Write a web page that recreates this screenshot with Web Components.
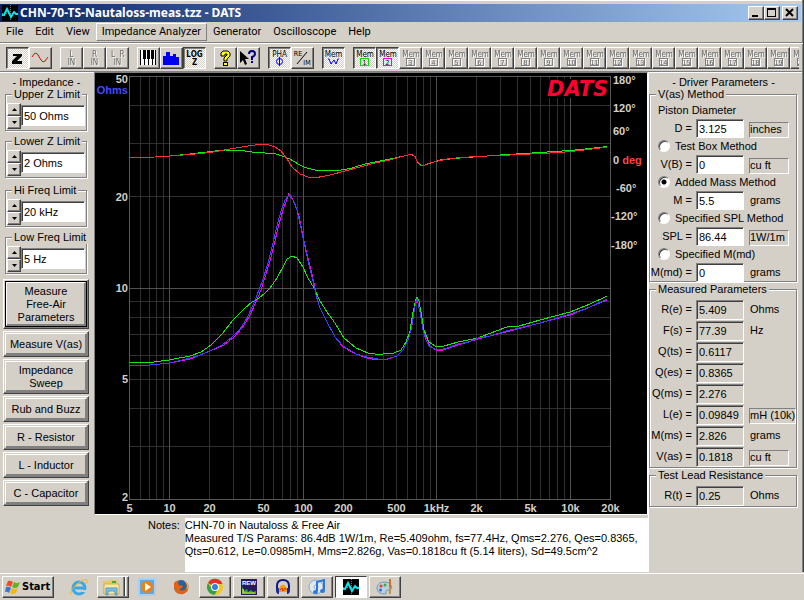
<!DOCTYPE html>
<html lang="en">
<head>
<meta charset="utf-8">
<title>CHN-70-TS-Nautaloss-meas.tzz - DATS</title>
<style>
  html, body { margin: 0; height: 100%; }
  body {
    --face: #d4d0c8;
    --shade: #808080;
    --dark: #404040;
    background: var(--face);
    color: #000;
    font: 11px/13px "Liberation Sans", Arial, sans-serif;
  }
</style>
</head>
<body>
<dats-app></dats-app>

<script>
// every element clones its own template into an open shadow root
function define(name, html, setup) {
  const template = document.createElement("template");
  template.innerHTML = html;
  customElements.define(name, class extends HTMLElement {
    constructor() {
      super();
      this.shadow = this.attachShadow({ mode: "open" });
      this.shadow.appendChild(template.content.cloneNode(true));
    }
    connectedCallback() {
      if (setup) setup(this, this.shadow);
    }
  });
}

// green/cyan trace on black, used in the title bar and on the taskbar
const datsIcon = `
  <svg width="16" height="16" viewBox="0 0 16 16" aria-hidden="true">
    <rect width="16" height="16" fill="#000"/>
    <path d="M8.500 0V16M0 8.500H16" stroke="#707070" stroke-width="1" stroke-dasharray="1 1"/>
    <path d="M0 10H2L5 4L9 12L12 7L14 9H16" fill="none" stroke="#00e8f0" stroke-width="2"/>
  </svg>`;

define("title-bar", `
  <style>
    :host { display: flex; align-items: center; height: 18px; margin: 4px 2px 0 0; padding: 0 3px 0 2px;
      background: linear-gradient(90deg, #0a246a, #a6caf0); }
    h1 { flex: 1; margin: 0 0 0 2px; color: #fff; font: bold 12px/18px "Noto Sans", sans-serif; white-space: nowrap; overflow: hidden; }
    button { width: 16px; height: 14px; padding: 0; display: flex; background: var(--face);
      border: 1px solid; border-color: #fff var(--dark) var(--dark) #fff; box-shadow: inset -1px -1px 0 var(--shade); }
    button:last-child { margin-left: 2px; }
    svg { display: block; flex: none; }
  </style>
  ${datsIcon}
  <h1><slot></slot></h1>
  <button aria-label="Minimize"><svg width="14" height="12"><path d="M3 8h6v2h-6z"/></svg></button>
  <button aria-label="Maximize"><svg width="14" height="12"><path d="M2 1h9v9h-9zM3 3v6h7v-6z" fill-rule="evenodd"/></svg></button>
  <button aria-label="Close"><svg width="14" height="12"><path d="M3 2L10 9M10 2L3 9" stroke="#000" stroke-width="2"/></svg></button>
`);

define("menu-bar", `
  <style>
    :host { display: block; border-bottom: 1px solid var(--shade); box-shadow: 0 1px 0 #fff; }
    nav { display: flex; height: 20px; align-items: center; }
    button { height: 18px; padding: 0 5px; border: 1px solid transparent; background: none; color: #000;
      font: 11px/16px Roboto, sans-serif; }
    button.hot { border-color: #fff var(--shade) var(--shade) #fff; }
  </style>
  <nav></nav>
`, (host, root) => {
  const nav = root.querySelector("nav");
  host.getAttribute("items").split("|").forEach((item) => {
    const button = document.createElement("button");
    button.textContent = item;
    if (item === host.getAttribute("hot")) button.className = "hot";
    nav.appendChild(button);
  });
});

define("tool-button", `
  <style>
    :host { display: block; flex: none; }
    button { display: block; width: 23px; height: 22px; padding: 0; background: var(--face);
      border: 1px solid; border-color: #fff var(--dark) var(--dark) #fff; box-shadow: inset -1px -1px 0 var(--shade); }
    :host([pressed]) button { background: repeating-conic-gradient(#fff 0 25%, var(--face) 0 50%) 0 0 / 2px 2px;
      border-color: var(--dark) #fff #fff var(--dark); box-shadow: inset 1px 1px 0 var(--shade); }
    svg { display: block; }
    text { font: 8px "DejaVu Sans Condensed", "DejaVu Sans", sans-serif; text-anchor: middle; }
    text.b { font-weight: bold; }
    :host([off]) svg { filter: drop-shadow(1px 1px 0 #fff); fill: #686868; }
  </style>
  <button><svg width="21" height="20" viewBox="0 0 21 20"></svg></button>
`, (host, root) => {
  root.querySelector("svg").innerHTML = toolIcons[host.getAttribute("icon")] || memIcon(host.getAttribute("icon"), host.hasAttribute("off"));
  root.querySelector("button").setAttribute("aria-label", host.getAttribute("label"));
  root.querySelector("button").disabled = host.hasAttribute("off");
});

function memIcon(n, off) {
  const color = off ? "#808080" : (n === "1" ? "#00e000" : "#f000f0");
  return `<text x="11" y="9">Mem</text>
    <rect x="6.5" y="10.5" width="8" height="7" fill="none" stroke="${color}"/>
    <text x="10.5" y="17" style="font-size:7px">${n}</text>`;
}

const toolIcons = {
  z: `<path d="M6 6H15V8L10 13H15V16H5V13L10 8H6Z"/>`,
  sine: `<path d="M2 9L4 6L6 5L8 7L11 12L13 14L15 13L18 9" fill="none" stroke="#f00000"/>`,
  lin: `<text x="10.5" y="9">L</text><text x="10.5" y="17">IN</text>`,
  rin: `<text x="10.5" y="9">R</text><text x="10.5" y="17">IN</text>`,
  lrin: `<text x="6" y="9">L</text><text x="15" y="9">R</text><text x="10.5" y="17">IN</text>`,
  piano: `<rect x="2" y="2" width="16" height="15" fill="#fff"/>
    <path d="M2.5 2V17M6.5 2V17M10.5 2V17M14.5 2V17M17.5 2V17" stroke="#000"/>
    <path d="M5 2h3v9h-3zM9 2h3v9h-3zM13 2h3v9h-3z"/>`,
  bars: `<path d="M2 17V8H5V4H9V8H12V6H15V9H18V17Z" fill="#0000f0"/>`,
  log: `<text x="10.5" y="9" class="b">LOG</text><text x="10.5" y="17" class="b">Z</text>`,
  help: `<path d="M6 7V5L8 3H13L15 5V8L12 11V13H9V10L12 7V6H10V8H6Z" fill="#ffff00" stroke="#000"/><rect x="8.500" y="14.500" width="4" height="3" fill="#ffff00" stroke="#000"/>`,
  context: `<path d="M2 3V15L5 12L7 17L9 16L7 11H11Z"/>
    <path d="M11 6Q11 3 14 3T17 6Q17 8 14 9V12M14 13V15" fill="none" stroke="#000080" stroke-width="2"/>`,
  pha: `<text x="10.5" y="9">PHA</text><path d="M10.5 9V18" stroke="#0000f0"/><ellipse cx="10.500" cy="13.500" rx="3" ry="3" fill="none" stroke="#0000f0"/>`,
  reim: `<text x="6" y="8" style="font-size:7px">RE</text><path d="M5 16L15 4" stroke="#000"/><text x="15" y="17" style="font-size:7px">IM</text>`,
  memw: `<text x="10.5" y="9">Mem</text><path d="M5 11H6L8 16L11 12L13 16L15 11H16" fill="none" stroke="#0000f0" stroke-width="1"/>`
};

define("tool-bar", `
  <style>
    :host { display: flex; gap: 8px; margin: 1px 4px 0 0; padding: 3px 0 2px 6px; overflow: hidden; }
    div { display: flex; flex: none; }
  </style>
  <div><tool-button icon="z" label="Impedance" pressed></tool-button><tool-button icon="sine" label="Oscilloscope"></tool-button></div>
  <div><tool-button icon="lin" label="Left in" off></tool-button><tool-button icon="rin" label="Right in" off></tool-button><tool-button icon="lrin" label="Left and right in" off></tool-button></div>
  <div><tool-button icon="piano" label="Notes"></tool-button><tool-button icon="bars" label="Bars"></tool-button><tool-button icon="log" label="Log Z" pressed></tool-button></div>
  <div><tool-button icon="help" label="Help"></tool-button><tool-button icon="context" label="Context help"></tool-button></div>
  <div><tool-button icon="pha" label="Phase" pressed></tool-button><tool-button icon="reim" label="Real / imaginary"></tool-button></div>
  <div><tool-button icon="memw" label="Working memory" pressed></tool-button></div>
  <div id="memories"></div>
`, (host, root) => {
  const memories = root.getElementById("memories");
  for (let n = 1; n <= 20; n++) {
    const state = n < 3 ? "pressed" : "off";
    memories.insertAdjacentHTML("beforeend", `<tool-button icon="${n}" label="Memory ${n}" ${state}></tool-button>`);
  }
});

define("group-box", `
  <style>
    :host { display: block; }
    fieldset { min-width: 0; margin: 0 1px 1px 0; padding: 0; border: 1px solid var(--shade);
      box-shadow: 1px 1px 0 #fff, inset 1px 1px 0 #fff; }
    legend { margin-left: 6px; padding: 0 2px; line-height: 13px; background: var(--face); white-space: nowrap; }
  </style>
  <fieldset><legend></legend><slot></slot></fieldset>
`, (host, root) => {
  root.querySelector("legend").textContent = host.getAttribute("caption");
});

define("spin-field", `
  <style>
    :host { display: block; }
    div { display: flex; align-items: center; height: 29px; padding: 0 1px; }
    span { flex: none; display: flex; flex-direction: column; }
    button { display: flex; align-items: center; justify-content: center; width: 14px; height: 13px; padding: 0; background: var(--face);
      border: 1px solid; border-color: #fff var(--dark) var(--dark) #fff; box-shadow: inset -1px -1px 0 var(--shade); }
    input { flex: 1; min-width: 0; box-sizing: border-box; height: 21px; padding: 0 0 0 2px; border: 1px solid;
      border-color: var(--shade) #fff #fff var(--shade); box-shadow: inset 1px 1px 0 var(--dark); background: #fff; font: inherit; color: #000; }
  </style>
  <div>
    <span>
      <button aria-label="Up"><svg width="5" height="3"><path d="M0 3L2.500 0L5 3Z"/></svg></button>
      <button aria-label="Down"><svg width="5" height="3"><path d="M0 0L2.500 3L5 0Z"/></svg></button>
    </span>
    <input type="text">
  </div>
`, (host, root) => {
  const input = root.querySelector("input");
  input.value = host.getAttribute("value");
  input.setAttribute("aria-label", host.getAttribute("label"));
});

define("command-button", `
  <style>
    :host { display: block; }
    button { display: block; width: 100%; padding: 1px; border: 1px solid; border-color: #fff var(--dark) var(--dark) #fff;
      box-shadow: inset -1px -1px 0 var(--shade); background: var(--face); font: inherit; color: #000; }
    span { display: flex; align-items: center; justify-content: center; min-height: 20px; white-space: nowrap;
      border: 1px solid; border-color: #fff var(--shade) var(--shade) #fff; box-shadow: inset -1px -1px 0 var(--shade); }
    :host([tall]) span { min-height: 29px; }
    :host([default]) span { min-height: 42px; outline: 1px solid #000; margin: 1px; }
  </style>
  <button><span><slot></slot></span></button>
`);

define("impedance-panel", `
  <style>
    :host { display: flex; flex-direction: column; padding: 1px 6px 0 5px; border-top: 1px solid #fff; }
    h2 { margin: 0; font: inherit; text-align: center; height: 14px; line-height: 16px; }
    .limits { display: flex; flex-direction: column; gap: 3px; }
    .limits + .limits { margin-top: 5px; }
    .commands { display: flex; flex-direction: column; gap: 2px; margin: 4px -1px 0 -2px; }
  </style>
  <h2>- Impedance -</h2>
  <div class="limits">
    <group-box caption="Upper Z Limit"><spin-field label="Upper Z Limit" value="50 Ohms"></spin-field></group-box>
    <group-box caption="Lower Z Limit"><spin-field label="Lower Z Limit" value="2 Ohms"></spin-field></group-box>
  </div>
  <div class="limits">
    <group-box caption="Hi Freq Limit"><spin-field label="Hi Freq Limit" value="20 kHz"></spin-field></group-box>
    <group-box caption="Low Freq Limit"><spin-field label="Low Freq Limit" value="5 Hz"></spin-field></group-box>
  </div>
  <div class="commands">
    <command-button default>Measure<br>Free-Air<br>Parameters</command-button>
    <command-button>Measure V(as)</command-button>
    <command-button tall>Impedance<br>Sweep</command-button>
    <command-button>Rub and Buzz</command-button>
    <command-button>R - Resistor</command-button>
    <command-button>L - Inductor</command-button>
    <command-button>C - Capacitor</command-button>
  </div>
`);

// log axes of the plot: frequency across, impedance down
const plot = { left: 129.5, right: 610.5, top: 76.5, bottom: 499.5 };
const xAt = (hz) => Math.floor(plot.left + (plot.right - plot.left) * Math.log10(hz / 5) / Math.log10(4000)) + 0.5;
const yAt = (ohm) => Math.floor(plot.top + (plot.bottom - plot.top) * Math.log10(50 / ohm) / Math.log10(25)) + 0.5;

const traces = [
  ["#f000f0", "130,366 150,365 170,363 190,359 210,351 224,345 234,337 242,328 249,317 256,302 261,290 265,277 270,261 274,245 279,224 283,210 287,199 288.5,194 291,196 295,204 299,216 303,236 307,254 311,270 314,283 317,298 320,308 326,320 335,337 343,347 356,354 367,358 378,360 388,359 397,356 403,350 408,340 412,325 415,306 417,299 420,312 424,332 430,346 436,350 443,350 458,345 478,339 506,332 536,324 570,315 607,300"],
  ["#18e818", "130,363 154,362 169,360 190,356 201,352 211,345 222,334 233,320 244,309 252,302 259,298 265,293 270,288 277,278 283,267 287,259 292,256 297,258 303,267 308,278 314,288 320,301 327,312 333,320 344,338 356,348 368,353 378,354.5 394,353 401,350 406,342 410,331 413,312 416,299 417,297 419,301 421,312 424,330 429,342 435,346 444,346 458,342 478,338 488,334 507,327 519,326 540,320 570,312 590,304 607,296"],
  ["#4040ff", "130,365 150,365 160,364 170,363 178,361 190,358 200,355 210,351 222,345 232,337 240,329 247,318 254,303 259,290 263,279 268,263 272,247 277,226 281,211 285,200 289,195 293,200 297,210 301,228 305,247 309,265 313,281 317,299 320,308 326,320 335,337 343,346 356,354 367,357 378,359 387,359 397,356 403,350 408,340 411,330 414,312 416,301 417,299 420,312 423,330 426,340 429,346 435,349 440,350 447,348 458,344 469,342 478,338 490,336 506,331 519,328 536,324 554,319 570,314 586,309 607,299"],
  ["#18e818", "130,157.5 155,157 170,156 190,154 215,151 225,150 242,150.5 255,152.5 275,153.5 282,156 290,159 298,164 305,167.5 315,170 325,170.5 338,170.5 350,168.500 365,164 380,161 395,158 408,155 412,154.5 415,157 418,163 421,165.500 425,165 440,160 460,158 500,155 540,152.500 570,150.5 590,148.5 607,146.5"],
  ["#ff3030", "130,157.5 155,157 170,156 190,154.500 210,152.500 230,149 245,146.5 258,144.5 268,144.5 275,147 281,151 287,159 292,167 300,174 308,177 317,177.5 330,175 345,171 360,167 375,163 390,160 400,157 408,155 412,154.5 415,156.5 417,161 420,165 423,165.7 430,163 440,160.500 450,158.5 475,156.5 500,155.500 540,153.500 560,152.5 580,150.5 600,148 607,147"]
];

define("impedance-chart", `
  <style>
    :host { display: block; border: 1px solid; border-color: var(--shade) #fff #fff var(--shade); }
    svg { display: block; width: 100%; background: #000; }
    path { fill: none; shape-rendering: crispEdges; }
    text { fill: #d4d0c8; font: bold 11px "Liberation Sans", Arial, sans-serif; }
    .x { text-anchor: middle; }
    .y { text-anchor: end; }
    .logo { fill: #ff0030; font: italic bold 21px "DejaVu Sans", sans-serif; }
  </style>
  <svg viewBox="95 73 552 441" role="img" aria-label="Impedance and phase against frequency">
    <g id="grid"></g><g id="traces"></g><g id="labels"></g>
  </svg>
`, (host, root) => {
  let minor = "", major = "";
  for (let decade = 1; decade <= 10000; decade *= 10) {
    for (let n = 1; n < 10; n++) {
      const hz = n * decade;
      if (hz <= 5 || hz >= 20000) continue;
      const line = `M${xAt(hz)} ${plot.top}V${plot.bottom}`;
      if (n === 1) major += line; else minor += line;
    }
  }
  [3, 4, 5, 6, 7, 8, 9, 20, 30, 40].forEach((ohm) => { minor += `M${plot.left} ${yAt(ohm)}H${plot.right}`; });
  major += `M${plot.left} ${yAt(10)}H${plot.right}`;
  root.getElementById("grid").innerHTML = `
    <path d="${minor}" stroke="#303030"/>
    <path d="${major}" stroke="#505050"/>
    <path d="M${plot.left} ${plot.top}H${plot.right}V${plot.bottom}H${plot.left}Z" stroke="#585858"/>
    <rect x="546" y="79" width="63" height="19"/>`;
  root.getElementById("traces").innerHTML = traces
    .map(([color, points]) => `<path d="M${points.replace(/ /g, "L")}" stroke="${color}"/>`).join("");

  const freq = [[5, "5"], [10, "10"], [20, "20"], [50, "50"], [100, "100"], [200, "200"], [500, "500"], [1000, "1kHz"], [2000, "2k"], [5000, "5k"], [10000, "10k"], [20000, "20k"]];
  const phase = [["180°", 84], ["120°", 112], ["60°", 135], ["-60°", 192], ["-120°", 220], ["-180°", 249]];
  root.getElementById("labels").innerHTML =
    freq.map(([hz, label]) => `<text class="x" x="${xAt(hz)}" y="512">${label}</text>`).join("") +
    [[50, 83], [20, 201], [10, 292], [5, 383], [2, 501]].map(([ohm, y]) => `<text class="y" x="128" y="${y}">${ohm}</text>`).join("") +
    phase.map(([label, y]) => `<text x="${label.length > 4 ? 611 : label[0] === "-" ? 616 : 613}" y="${y}">${label}</text>`).join("") +
    `<text x="613" y="164">0 <tspan fill="#ff4040">deg</tspan></text>
     <text class="y" x="128" y="94" style="fill:#4848ff">Ohms</text>
     <text class="logo" x="547" y="96">DATS</text>`;
});

define("notes-field", `
  <style>
    :host { display: flex; gap: 5px; padding: 3px 0 0 54px; }
    label { margin-top: 1px; }
    textarea { flex: 1; min-width: 0; height: 54px; box-sizing: border-box; padding: 1px 0; border: 0; resize: none; overflow: hidden;
      background: #fff; color: #000; font: inherit; }
  </style>
  <label for="notes">Notes:</label>
  <textarea id="notes" spellcheck="false"></textarea>
`, (host, root) => {
  root.getElementById("notes").value = host.textContent.trim();
});

define("driver-panel", `
  <style>
    :host { display: block; padding: 1px 4px 0 0; border: solid #fff; border-width: 1px 0 0 1px; }
    h2 { margin: 0; font: inherit; text-align: center; height: 14px; line-height: 16px; }
    .row { display: grid; grid-template-columns: 46px 48px auto 1fr; align-items: center; height: 18px; white-space: nowrap; }
    .row label { text-align: right; padding-right: 4px; }
    .row input { box-sizing: border-box; width: 48px; height: 19px; padding: 0 0 0 2px; border: 1px solid;
      border-color: var(--shade) #fff #fff var(--shade); box-shadow: inset 1px 1px 0 var(--dark); background: #fff; color: #000; font: inherit; }
    .row span { margin-left: 6px; }
    .row button { margin: 2px 0 0 5px; min-width: 40px; height: 16px; padding: 0; border: 1px solid;
      border-color: var(--shade) #fff #fff var(--shade); background: var(--face); color: #000; font: inherit; text-align: left; }
    .text, .option { display: flex; align-items: center; height: 18px; padding-left: 8px; }
    .option { gap: 5px; }
    .option input { appearance: none; width: 12px; height: 12px; margin: 0; border: 1px solid; border-radius: 50%;
      border-color: var(--shade) #fff #fff var(--shade); box-shadow: inset 1px 1px 0 var(--dark); background: #fff; }
    .option input:checked { background: radial-gradient(circle, #000 2px, #fff 3px); }
    .measured { padding-top: 3px; }
    .measured .row { height: 21px; }
    .measured input { height: 20px; background: var(--face); }
    group-box + group-box { margin-top: 1px; }
  </style>
  <h2>- Driver Parameters -</h2>
  <group-box caption="V(as) Method"><div id="method"></div></group-box>
  <group-box caption="Measured Parameters"><div id="measured" class="measured"></div></group-box>
  <group-box caption="Test Lead Resistance"><div id="lead" class="measured"></div></group-box>
`, (host, root) => {
  let count = 0;
  const row = (label, value, unit, readonly) => {
    const id = "p" + (++count);
    const tail = unit[0] === "[" ? `<button>${unit.slice(1, -1)}</button>` : `<span>${unit}</span>`;
    return `<div class="row"><label for="${id}">${label} =</label><input id="${id}" type="text" value="${value}" ${readonly ? "readonly" : ""}>${tail}</div>`;
  };
  const option = (label, checked) => {
    const id = "o" + (++count);
    return `<div class="option"><input type="radio" name="method" id="${id}" ${checked ? "checked" : ""}><label for="${id}">${label}</label></div>`;
  };
  root.getElementById("method").innerHTML =
    `<div class="text">Piston Diameter</div>` +
    row("D", "3.125", "[inches]") +
    option("Test Box Method") +
    row("V(B)", "0", "[cu ft]") +
    option("Added Mass Method", true) +
    row("M", "5.5", "grams") +
    option("Specified SPL Method") +
    row("SPL", "86.44", "[1W/1m]") +
    option("Specified M(md)") +
    row("M(md)", "0", "grams");
  root.getElementById("measured").innerHTML = [
    ["R(e)", "5.409", "Ohms"],
    ["F(s)", "77.39", "Hz"],
    ["Q(ts)", "0.6117", ""],
    ["Q(es)", "0.8365", ""],
    ["Q(ms)", "2.276", ""],
    ["L(e)", "0.09849", "[mH (10k)]"],
    ["M(ms)", "2.826", "grams"],
    ["V(as)", "0.1818", "[cu ft]"]
  ].map((p) => row(p[0], p[1], p[2], true)).join("");
  root.getElementById("lead").innerHTML = row("R(t)", "0.25", "Ohms", true);
});

const taskIcons = {
  ie: `<circle cx="10" cy="11" r="6" fill="none" stroke="#38a8e8" stroke-width="3"/><path d="M5 11H16" stroke="#38a8e8" stroke-width="3"/><path d="M13 13H18V15H13Z" fill="#d4d0c8"/><path d="M2 18Q0 15 7 8Q15 1 18 3Q19 4 17 7" fill="none" stroke="#f0b820" stroke-width="1"/>`,
  folder: `<path d="M2 4H8L9 3H16L17 5V17H2Z" fill="#e8c860"/><path d="M3 7H18V17H3Z" fill="#f8e8a0" stroke="#d0b050"/><path d="M5 18V11H16V18H14V14H7V18Z" fill="#80c0e8" stroke="#5098c8"/><path d="M11 5H15" stroke="#40a840" stroke-width="2"/>`,
  wmp: `<rect x="2" y="2" width="16" height="16" fill="#60a8e0" stroke="#a8d0f0" stroke-width="2"/><circle cx="10" cy="10" r="6" fill="#f08010"/><path d="M8 6L14 10L8 14Z" fill="#fff"/>`,
  firefox: `<circle cx="10" cy="10" r="7" fill="#2860a8"/><path d="M3 6Q5 3 8 4Q6 6 8 8L12 9Q11 12 8 12Q11 15 15 12Q17 9 14 4Q19 7 17 13Q14 18 9 17Q2 16 3 6Z" fill="#e86010"/><path d="M14 4Q18 8 16 12" fill="none" stroke="#f8c030" stroke-width="1"/>`,
  chrome: `<circle cx="10" cy="10" r="8" fill="#f0c820"/><path d="M10 10L3 6A8 8 0 0 1 17.500 7H10Z" fill="#d83828"/><path d="M3 6A8 8 0 0 0 9.500 18L13 12L7 12Z" fill="#38a048"/><circle cx="10" cy="10" r="4" fill="#fff"/><circle cx="10" cy="10" r="3" fill="#3880d8"/>`,
  rew: `<rect x="2" y="2" width="16" height="16" fill="#281860"/><text x="10" y="8" fill="#fff" text-anchor="middle" font-family="Liberation Sans" font-weight="bold" font-size="6">REW</text><path d="M3 17V9L5 14L8 12L9 15L12 13L14 15L17 14V17Z" fill="#20b040"/><path d="M4 17V12L5 16H16" fill="none" stroke="#e8d020"/>`,
  audacity: `<path d="M4 12V9Q4 3 10 3T16 9V12" fill="none" stroke="#101880" stroke-width="2"/><path d="M6 11Q10 4 14 11V15H6Z" fill="#f0a010"/><path d="M3 11H6V17H5Q3 16 3 14ZM14 11H17V14Q17 16 15 17H14Z" fill="#1828a0"/><path d="M7 13L9 11L10 14L12 11L13 13" fill="none" stroke="#e03010"/>`,
  itunes: `<circle cx="9" cy="10" r="7" fill="#e0e8f0" stroke="#90a8c0"/><circle cx="9" cy="10" r="2" fill="#fff" stroke="#90a8c0"/><path d="M10 14V5L17 3V13" fill="none" stroke="#2878e0" stroke-width="2"/><ellipse cx="8.500" cy="15" rx="2.500" ry="2" fill="#2878e0"/><ellipse cx="15.500" cy="14" rx="2.500" ry="2" fill="#2878e0"/>`,
  dats: `<g transform="translate(2 2)">${datsIcon}</g>`,
  paint: `<path d="M10 5Q2 5 2 11T10 17Q12 17 11 15T14 13Q18 13 16 8Q14 5 10 5Z" fill="#b8d0e0" stroke="#7898b0"/><circle cx="6" cy="9" r="1.500" fill="#e04030"/><circle cx="10" cy="8" r="1.500" fill="#40a840"/><circle cx="5.500" cy="13" r="1.500" fill="#3070d0"/><path d="M15 2V10" stroke="#d07020" stroke-width="2"/><path d="M15 10V17" stroke="#c09050" stroke-width="2"/>`
};

define("task-button", `
  <style>
    :host { display: block; }
    button { display: flex; align-items: center; justify-content: center; width: 32px; height: 22px; padding: 0; border: 1px solid transparent; background: none; }
    :host([open]) button, :host([stack]) button { border-color: #fff var(--dark) var(--dark) #fff; box-shadow: inset -1px -1px 0 var(--shade); }
    :host([stack]) button { justify-content: flex-start; padding-left: 3px; background: linear-gradient(90deg, transparent 25px, var(--shade) 25px 26px, var(--dark) 26px 27px, #fff 27px 28px, transparent 28px); }
    :host([active]) button { border-color: var(--dark) #fff #fff var(--dark); background: #fff; }
  </style>
  <button><svg width="20" height="20" viewBox="0 0 20 20"></svg></button>
`, (host, root) => {
  root.querySelector("svg").innerHTML = taskIcons[host.getAttribute("icon")];
  root.querySelector("button").setAttribute("aria-label", host.getAttribute("label"));
});

define("task-bar", `
  <style>
    :host { display: flex; gap: 2px; padding: 2px; border-top: 1px solid #fff; margin-top: 1px; }
    .start { display: flex; align-items: center; gap: 2px; width: 52px; height: 22px; margin-right: 7px; padding: 0 2px; background: var(--face); color: #000;
      border: 1px solid; border-color: #fff var(--dark) var(--dark) #fff; box-shadow: inset -1px -1px 0 var(--shade);
      font: bold 11px/18px "DejaVu Sans Condensed", "DejaVu Sans", sans-serif; }
    .start svg { flex: none; }
  </style>
  <button class="start">
    <svg width="15" height="16" viewBox="0 0 15 16" aria-hidden="true">
      <path d="M3 2Q5 1 8 3L6 8Q4 6 1 7Z" fill="#e85020"/><path d="M9 3Q12 5 15 3L13 8Q10 10 7 8Z" fill="#68b028"/>
      <path d="M1 8Q4 7 6 9L4 14Q2 12 0 13Z" fill="#3878d0"/><path d="M7 9Q10 11 13 9L11 14Q8 16 5 14Z" fill="#f0b818"/>
    </svg>Start</button>
  <task-button icon="ie" label="Internet Explorer"></task-button>
  <task-button icon="folder" label="Explorer" stack></task-button>
  <task-button icon="wmp" label="Media Player"></task-button>
  <task-button icon="firefox" label="Firefox"></task-button>
  <task-button icon="chrome" label="Chrome" open></task-button>
  <task-button icon="rew" label="Room EQ Wizard" open></task-button>
  <task-button icon="audacity" label="Audacity" open></task-button>
  <task-button icon="itunes" label="iTunes" open></task-button>
  <task-button icon="dats" label="DATS" active></task-button>
  <task-button icon="paint" label="Paint" open></task-button>
`);

define("dats-app", `
  <style>
    :host { display: flex; flex-direction: column; min-height: 100vh; }
    .window { flex: 1; display: flex; flex-direction: column; border-right: 1px solid var(--dark);
      box-shadow: inset -1px 0 0 var(--shade), inset 0 2px 0 -1px #fff; }
    main { flex: 1; display: grid; grid-template-columns: 94px minmax(0, 1fr) 154px; margin-right: 1px; border-top: 1px solid var(--shade); }
    main > * { min-width: 0; }
  </style>
  <div class="window">
    <title-bar>CHN-70-TS-Nautaloss-meas.tzz - DATS</title-bar>
    <menu-bar items="File|Edit|View|Impedance Analyzer|Generator|Oscilloscope|Help" hot="Impedance Analyzer"></menu-bar>
    <tool-bar></tool-bar>
    <main>
      <impedance-panel></impedance-panel>
      <div>
        <impedance-chart></impedance-chart>
        <notes-field>CHN-70 in Nautaloss &amp; Free Air
Measured T/S Params: 86.4dB 1W/1m, Re=5.409ohm, fs=77.4Hz, Qms=2.276, Qes=0.8365,
Qts=0.612, Le=0.0985mH, Mms=2.826g, Vas=0.1818cu ft (5.14 liters), Sd=49.5cm^2</notes-field>
      </div>
      <driver-panel></driver-panel>
    </main>
  </div>
  <task-bar></task-bar>
`);
</script>
</body>
</html>
